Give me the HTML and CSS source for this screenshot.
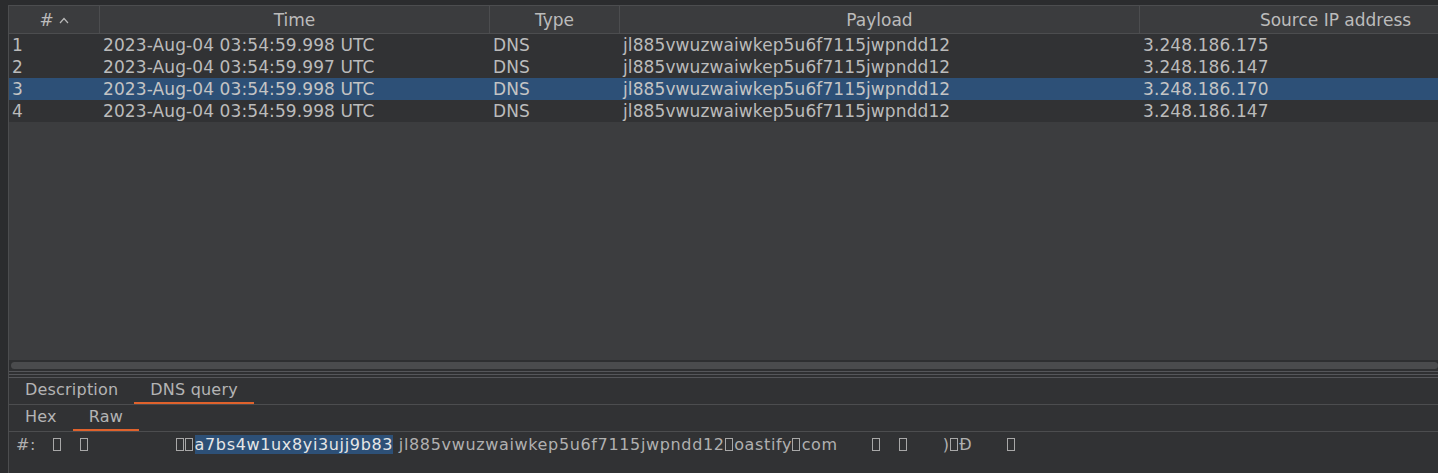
FILE: index.html
```html
<!DOCTYPE html>
<html>
<head>
<meta charset="utf-8">
<link rel="stylesheet" href="styles.css">
</head>
<body>
<div class="app">
  <div class="table-panel">
    <div class="thead">
      <div class="th th-num"><span>#</span><svg class="sort" width="10" height="7" viewBox="0 0 10 7"><polyline points="1,6 5,1.5 9,6" fill="none" stroke="#b8b8b8" stroke-width="1.2"/></svg></div>
      <div class="th">Time</div>
      <div class="th">Type</div>
      <div class="th">Payload</div>
      <div class="th">Source IP address</div>
    </div>
    <div class="tbody">
      <div class="tr">
        <div class="td">1</div><div class="td">2023-Aug-04 03:54:59.998 UTC</div><div class="td">DNS</div><div class="td">jl885vwuzwaiwkep5u6f7115jwpndd12</div><div class="td">3.248.186.175</div>
      </div>
      <div class="tr">
        <div class="td">2</div><div class="td">2023-Aug-04 03:54:59.997 UTC</div><div class="td">DNS</div><div class="td">jl885vwuzwaiwkep5u6f7115jwpndd12</div><div class="td">3.248.186.147</div>
      </div>
      <div class="tr selected">
        <div class="td">3</div><div class="td">2023-Aug-04 03:54:59.998 UTC</div><div class="td">DNS</div><div class="td">jl885vwuzwaiwkep5u6f7115jwpndd12</div><div class="td">3.248.186.170</div>
      </div>
      <div class="tr">
        <div class="td">4</div><div class="td">2023-Aug-04 03:54:59.998 UTC</div><div class="td">DNS</div><div class="td">jl885vwuzwaiwkep5u6f7115jwpndd12</div><div class="td">3.248.186.147</div>
      </div>
    </div>
    <div class="empty"></div>
    <div class="hscroll"><div class="thumb"></div></div>
  </div>
  <div class="splitter">
    <div class="split-line"></div>
    <div class="split-line"></div>
  </div>
  <div class="detail">
    <div class="tabs">
      <div class="tab">Description</div>
      <div class="tab active">DNS query</div>
    </div>
    <div class="tabs">
      <div class="tab">Hex</div>
      <div class="tab active">Raw</div>
    </div>
    <div class="raw">#:   <span class="tofu"></span>   <span class="tofu"></span>               <span class="tofu"></span><span class="tofu"></span><span class="sel">a7bs4w1ux8yi3ujj9b83</span> jl885vwuzwaiwkep5u6f7115jwpndd12<span class="tofu"></span>oastify<span class="tofu"></span>com      <span class="tofu"></span>   <span class="tofu"></span>      )<span class="tofu"></span>Đ      <span class="tofu"></span></div>
  </div>
</div>
</body>
</html>
```
FILE: styles.css
```css
html, body {
  margin: 0;
  padding: 0;
  background: #2b2c2e;
}
body {
  font-family: "DejaVu Sans", sans-serif;
  color: #bbbbbb;
  width: 1438px;
  height: 473px;
  overflow: hidden;
}
.app {
  display: flex;
  flex-direction: column;
  height: 473px;
  padding-top: 5px;
  box-sizing: border-box;
}
.table-panel {
  flex: 1;
  display: flex;
  flex-direction: column;
  margin-left: 8px;
  border-left: 1px solid #4c4d4f;
  border-top: 1px solid #4c4d4f;
  background: #3c3d3f;
  overflow: hidden;
  min-height: 0;
}
.thead, .tr {
  display: grid;
  grid-template-columns: 91px 390px 130px 520px 392px;
  width: 1523px;
}
.thead {
  background: #3b3c3e;
  border-bottom: 1px solid #4c4d4f;
  height: 27px;
  box-sizing: content-box;
}
.th {
  box-sizing: border-box;
  border-right: 1px solid #4c4d4f;
  font-size: 17px;
  line-height: 26px;
  padding-top: 1px;
  text-align: center;
  white-space: nowrap;
  color: #bbbbbb;
}
.th-num {
  display: flex;
  justify-content: center;
  align-items: center;
  gap: 5px;
}
.tbody {
  background: #313234;
}
.tr {
  height: 22px;
  background: #313234;
}
.tr.selected {
  background: #2d5077;
  color: #c4c4c4;
}
.td {
  font-size: 17px;
  line-height: 21px;
  letter-spacing: 0.1px;
  padding-top: 1px;
  padding-left: 3px;
  white-space: nowrap;
  overflow: hidden;
}
.empty {
  flex: 1;
}
.hscroll {
  height: 10px;
  background: #2e2f31;
  display: flex;
  padding: 2px 0 1px 2px;
  box-sizing: border-box;
  flex: none;
}
.thumb {
  flex: 1;
  height: 7px;
  border-radius: 4px;
  background: #4a4b4d;
}
.splitter {
  margin-left: 8px;
  border-left: 1px solid #4c4d4f;
  height: 7px;
  padding-top: 1px;
  box-sizing: border-box;
  display: flex;
  flex-direction: column;
  gap: 2px;
  background: #2f3032;
  flex: none;
}
.split-line {
  height: 1px;
  background: #55565a;
}
.detail {
  flex: none;
  height: 95px;
  margin-left: 8px;
  border-left: 1px solid #4c4d4f;
  border-top: 1px solid #55565a;
  background: #313234;
  display: flex;
  flex-direction: column;
}
.tabs {
  display: flex;
  height: 26px;
  border-bottom: 1px solid #4c4d4f;
  flex: none;
}
.tab {
  font-size: 16px;
  line-height: 24px;
  height: 24px;
  letter-spacing: 0.2px;
  padding: 0 16px;
  border-bottom: 2px solid transparent;
  color: #b4b4b4;
  white-space: nowrap;
}
.tab.active {
  border-bottom-color: #e0622c;
}
.raw {
  font-size: 16px;
  line-height: 17px;
  letter-spacing: 0.65px;
  padding: 4px 0 0 7px;
  white-space: pre;
  color: #b0b0b0;
}
.raw .sel {
  background: #2d5077;
  color: #e6e6e6;
}
.tofu {
  display: inline-block;
  width: 6px;
  height: 11px;
  border: 1px solid #a8a8a8;
  margin-right: 1.5px;
  vertical-align: -1px;
}
```
